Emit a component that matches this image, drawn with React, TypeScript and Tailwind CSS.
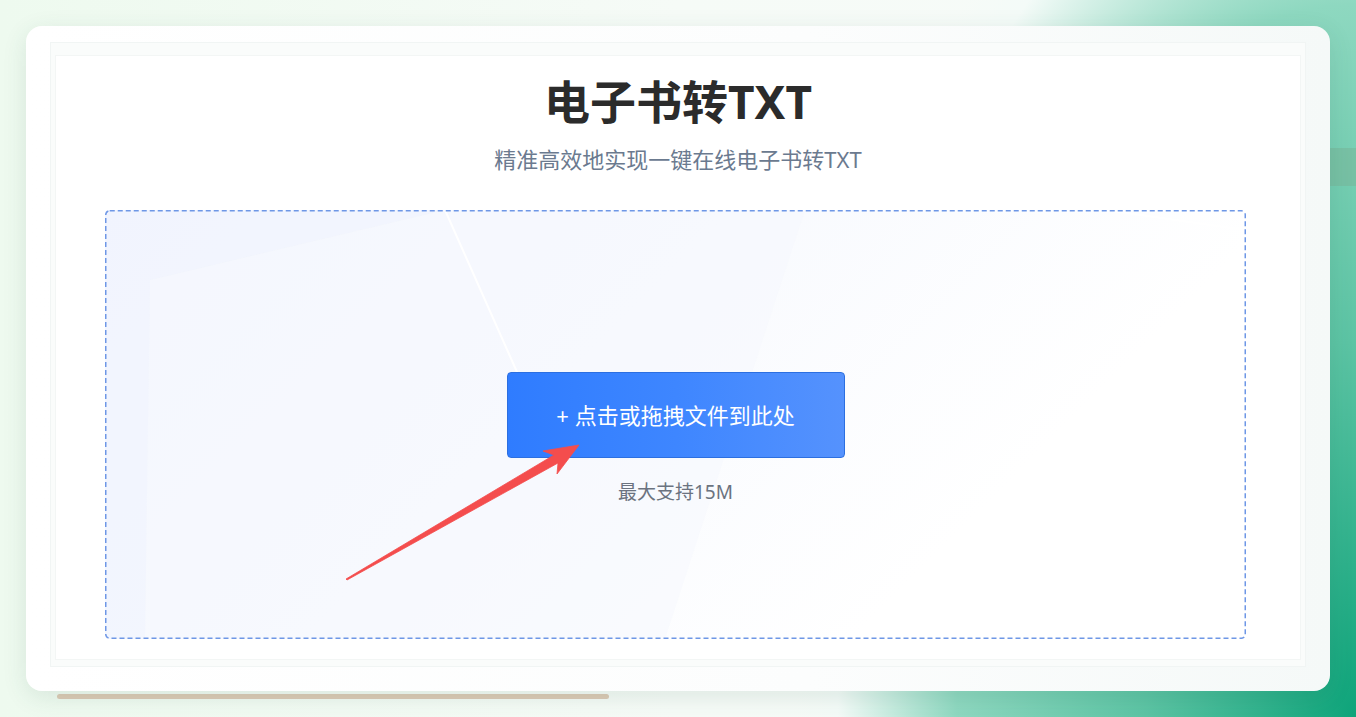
import React from "react";

const FONT = { fontFamily: '"Noto Sans", "Noto Sans CJK SC", sans-serif' };

// 红色引导箭头（坐标相对于虚线框）
function PointerArrow() {
  return (
    <svg
      className="pointer-events-none absolute left-0 top-0 z-10"
      width="500"
      height="400"
      viewBox="0 0 500 400"
    >
      <polygon
        points="241,369 449,245 438,241 474,235 452,264 453,253 242,370"
        fill="#f44d4d"
        stroke="#f44d4d"
        strokeWidth="0.8"
        strokeLinejoin="round"
      />
    </svg>
  );
}

// 虚线框背景里的淡色几何块
function DropBg() {
  return (
    <svg className="pointer-events-none absolute inset-0 h-full w-full" preserveAspectRatio="none" viewBox="0 0 1141 429">
      <polygon points="0,0 340,0 45,70 40,429 0,429" fill="#f0f4fd" opacity="0.6" />
      <polygon points="340,0 700,0 560,429 45,429 45,70" fill="#f6f8fe" opacity="0.5" />
      <line x1="340" y1="0" x2="420" y2="180" stroke="#ffffff" strokeWidth="2" />
      <line x1="1000" y1="0" x2="1141" y2="20" stroke="#ffffff" strokeWidth="2" />
    </svg>
  );
}

export default function App() {
  return (
    <div
      className="relative h-[717px] w-full overflow-hidden bg-[radial-gradient(ellipse_700px_1250px_at_100%_100%,#0ea47a_0%,#5cc4a4_30%,#8ed8c0_57%,#f4fbf8_74%,rgba(255,255,255,0)_80%),linear-gradient(90deg,#eefaef_0%,#f6fbf7_50%,#f7fbf9_100%)] p-[26px]"
      style={FONT}
    >
      {/* 右侧被遮挡的侧栏 */}
      <div className="absolute right-0 top-[148px] h-[38px] w-[40px] bg-[#78bb9e]/70" />

      {/* 卡片下方的进度条 */}
      <div className="absolute left-[57px] top-[694px] h-[5px] w-[552px] rounded-full bg-[#dccab5]" />

      <div className="relative h-[665px] rounded-[16px] bg-[linear-gradient(90deg,#ffffff_0%,#fcfdfd_60%,#f5f9f8_100%)] px-[24px] pb-[24px] pt-[16px] shadow-[0_6px_24px_rgba(40,90,70,0.12)]">
        <div className="h-full border border-[#f1f5f4] bg-[#fafcfb] px-[4px] pb-[6px] pt-[12px]">
          <div className="flex h-full flex-col items-center border border-[#f3f6f5] bg-white pt-[16px]">
            <h1 className="text-[46px] font-bold leading-[58px] text-[#2b2b2b]">电子书转TXT</h1>
            <p className="mt-[14px] text-[22px] leading-[30px] text-[#6b7a8f]">精准高效地实现一键在线电子书转TXT</p>

            <div className="relative mr-[5px] mt-[36px] flex h-[429px] w-[1141px] flex-col items-center overflow-hidden rounded-[4px] bg-[linear-gradient(135deg,#f3f6fe_0%,#f8fafe_40%,#ffffff_75%)] pt-[162px]">
              <DropBg />
              {/* 虚线边框 */}
              <svg className="pointer-events-none absolute inset-0 h-full w-full">
                <rect
                  x="0.75"
                  y="0.75"
                  width="1139.5"
                  height="427.5"
                  rx="4"
                  fill="none"
                  stroke="#6e97e6"
                  strokeWidth="1.5"
                  strokeDasharray="5 3"
                />
              </svg>
              <button className="relative flex h-[86px] w-[338px] items-center justify-center rounded-[4px] border border-[#2c6fe0] bg-[linear-gradient(90deg,#2f7cff_0%,#3e86ff_50%,#5592fd_100%)] text-[22px] text-white">
                + 点击或拖拽文件到此处
              </button>
              <p className="relative mt-[21px] text-[19px] leading-[26px] text-[#6b7380]">最大支持15M</p>
              <PointerArrow />
            </div>
          </div>
        </div>
      </div>
    </div>
  );
}
